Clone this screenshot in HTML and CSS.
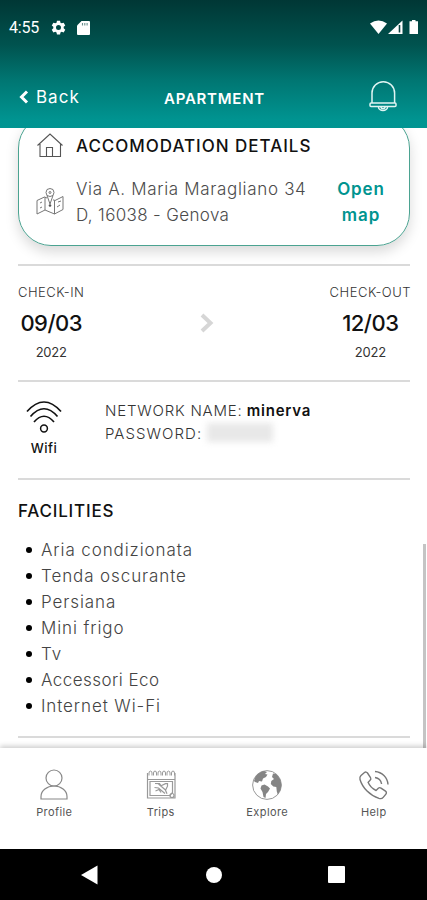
FILE: index.html
```html
<!DOCTYPE html>
<html lang="en">
<head>
<meta charset="utf-8">
<title>Apartment</title>
<link rel="stylesheet" href="styles.css">
</head>
<body>
<div class="app">
  <header class="header">
    <div class="status">
      <span class="clock">4:55</span>
      <svg class="gear" width="15" height="15" viewBox="0 0 24 24"><path fill="#fff" fill-rule="evenodd" d="M9.500 1h5l.6 3.200 2 1.100 3.100-1.100 2.600 4.400-2.500 2.200v2.400l2.500 2.200-2.600 4.400-3.100-1.100-2 1.100-.6 3.200h-5l-.6-3.200-2-1.100-3.100 1.100-2.600-4.400 2.500-2.200v-2.400L1.200 8.600l2.600-4.400 3.100 1.100 2-1.100zM12 8a4 4 0 1 0 0 8 4 4 0 0 0 0-8z"/></svg>
      <svg class="sd" width="13" height="14" viewBox="0 0 13 14"><path fill="#fff" d="M4.500 0H12a1 1 0 0 1 1 1v12a1 1 0 0 1-1 1H1a1 1 0 0 1-1-1V4.500z"/><path stroke="#68908e" stroke-width="1.100" d="M5.500 2v2.500M7.800 2v2.500M10.100 2v2.500"/></svg>
      <svg class="signals" width="50" height="15" viewBox="0 0 50 15"><path fill="#fff" d="M0 3.500Q8.500-2.500 17 3.500L8.500 14z"/><path fill="#fff" d="M32.500.5V14H18z"/><path stroke="#0a4340" stroke-width="1.600" d="M29.500 5v7.500"/><path fill="#fff" d="M42 0h3.500v1.300H48V14h-8.500V1.300H42z"/></svg>
    </div>
    <div class="titlebar">
      <div class="back"><svg width="10" height="14" viewBox="0 0 10 14"><path d="M8 1.500 2.500 7 8 12.500" fill="none" stroke="#fff" stroke-width="3"/></svg><span>Back</span></div>
      <h1>APARTMENT</h1>
      <svg class="bell" width="28" height="32" viewBox="0 0 28 32"><g fill="none" stroke="#dff5f3" stroke-width="1.500"><path d="M3 23V13a11.300 11.300 0 0 1 22.600 0v10"/><rect x="1" y="23" width="26" height="3.500" rx="1"/><path d="M9.500 27a4.500 3.500 0 0 0 9 0M12 27a2 1.600 0 0 0 4 0"/></g></svg>
    </div>
  </header>

  <main class="content">
    <section class="card">
      <div class="row heading">
        <svg width="28" height="28" viewBox="0 0 28 28"><g fill="none" stroke="#555" stroke-width="1.100"><path d="M1.500 13.500 14 2l12.500 11.500M4 12v12.500h20.500V12M10.500 24V15.500h6V24"/></g></svg>
        <h2>ACCOMODATION DETAILS</h2>
      </div>
      <div class="row address">
        <svg width="28" height="30" viewBox="0 0 28 30"><g fill="none" stroke="#777" stroke-width="1"><path d="M11 11 8.500 10 1 13.500V27l8-4 9.500 4 8.500-4.500V9.500l-8 4-2-.7M9 10v13M18.500 13.500V27"/><circle cx="14" cy="5.500" r="4"/><path d="m11 8.500 3 8.500 3-8.500M4 16l2-1M22 15l3-1M21 20l3-2M4 21l2-1"/><circle cx="14" cy="5.500" r="1"/></g><circle cx="14" cy="18.500" r="1.300" fill="#555"/></svg>
        <p><span class="addr1">Via A. Maria Maragliano 34</span><br><span class="addr2">D, 16038 - Genova</span></p>
        <div class="open">Open<br>map</div>
      </div>
    </section>

    <section class="dates">
      <div class="date in"><small>CHECK-IN</small><strong>09/03</strong><span>2022</span></div>
      <svg width="14" height="20" viewBox="0 0 14 20"><path d="m2 2 8.500 8L2 18" fill="none" stroke="#d6d6d6" stroke-width="4"/></svg>
      <div class="date out"><small>CHECK-OUT</small><strong>12/03</strong><span>2022</span></div>
    </section>

    <section class="wifi">
      <div class="wifi-icon">
        <svg width="36" height="34" viewBox="0 0 36 34"><g fill="none" stroke="#111" stroke-width="1.700"><path d="M1 11.500Q18-7.500 35 11.500M4.500 16.500Q18 1 31.500 16.500M8 22Q18 10.500 28 22"/><circle cx="18" cy="28.500" r="3.400" stroke-width="1.500"/></g></svg>
        <span>Wifi</span>
      </div>
      <div class="network">
        <div><span class="net">NETWORK NAME:</span> <b>minerva</b></div>
        <div class="password"><span class="pass">PASSWORD:</span><i></i></div>
      </div>
    </section>

    <section class="facilities">
      <h2>FACILITIES</h2>
      <ul>
        <li>Aria condizionata</li>
        <li>Tenda oscurante</li>
        <li>Persiana</li>
        <li>Mini frigo</li>
        <li>Tv</li>
        <li class="tight">Accessori Eco</li>
        <li>Internet Wi-Fi</li>
      </ul>
    </section>
    <div class="scrollbar"></div>
  </main>

  <nav class="tabs">
    <div class="tab"><svg width="32" height="32" viewBox="0 0 32 32"><g fill="none" stroke="#888" stroke-width="1.200"><circle cx="16" cy="9" r="8"/><path d="M3 30v-2.500C3 21.500 9 17 16 17s13 4.500 13 10.500V30z"/></g></svg><span>Profile</span></div>
    <div class="tab"><svg width="32" height="32" viewBox="0 0 32 32"><g fill="none" stroke="#999" stroke-width="1.200"><path d="M2.500 4v25H30V4M2.500 10.500H30M5 12.500v14h20l2.500-3V12.500z"/><path d="M4 6.500V4a1.400 1.800 0 0 1 3 0v2.500m1.500 0V4a1.400 1.800 0 0 1 3 0v2.500m1.500 0V4a1.400 1.800 0 0 1 3 0v2.500m1.500 0V4a1.400 1.800 0 0 1 3 0v2.500m1.500 0V4a1.400 1.800 0 0 1 3 0v2.500m1.500 0V4a1.400 1.800 0 0 1 3 0v2.500" stroke-width="1"/><path d="m10 14.500 4.500.2 1.500 2 4.500-2h2v2.500l-2 4 1.500 3.500M9.500 18.500l4 .5 6.500 5.500M13.500 15l7 6M10.500 22l3.500-1.500 2 3" stroke-width="1.200"/><circle cx="27" cy="26.500" r="2"/></g></svg><span>Trips</span></div>
    <div class="tab"><svg width="32" height="32" viewBox="0 0 32 32"><circle cx="16" cy="16" r="14.400" fill="#fff" stroke="#999"/><path fill="#858585" d="M3 12C4 6.500 8 3 13 2l3 1-2 2 2.500.5L15 8l-3 1.500-1 3-3-.5-1 2-3-1zM10.500 16.500l3-1 3.500 2 2 2-2 3.500-2 2-.5 4-2-1-1-5-2-3.500zM22 4.500l3 .5c3.500 3 5.500 7 5.300 12-.3 3-1.500 6-3.500 8.500l-1-3-.5-4.500-3-.5-2.500-2.500.5-3L23 10l-2-2z"/></svg><span>Explore</span></div>
    <div class="tab"><svg width="32" height="32" viewBox="0 0 32 32"><g fill="none" stroke="#777" stroke-width="1.400"><path d="M3 6.500 6.500 3.500c1-.8 2.300-.5 3 .5l3 4.500c.6 1 .4 2-.4 2.800l-2 2c1.400 3.500 4.400 6.500 8 8.200l2.200-2.200c.8-.8 1.800-.8 2.700-.2l4.500 3c1 .7 1.200 2 .4 3l-2.700 3.300c-1 1.200-2.800 1.400-4.200 1C12 26.500 4.500 19 2 10.500c-.4-1.400 0-3 1-4z"/><path d="M17 2.500C24 3 29.500 8.500 30 15.500M17 8.500c3.500.5 6 3 6.600 6.500"/></g></svg><span>Help</span></div>
  </nav>

  <footer class="system">
    <svg width="17" height="20" viewBox="0 0 17 20"><path fill="#fff" d="M0 10 16.500.5v19z"/></svg>
    <div class="home"></div>
    <div class="recent"></div>
  </footer>
</div>
</body>
</html>
```
FILE: styles.css
```css
* { box-sizing: border-box; margin: 0; padding: 0; }
body { background: #fff; font-family: Inter, "Open Sans", sans-serif; color: #111; }
svg { display: block; flex: none; }
.app { width: 427px; height: 900px; display: flex; flex-direction: column; overflow: hidden; white-space: nowrap; }

.header { height: 128px; flex: none; position: relative; z-index: 1; background: linear-gradient(#003735 0, #00534f 45px, #007672 80px, #009491 120px, #009592 128px); color: #fff; }
.status { height: 55px; padding: 0 7px 0 9px; display: flex; align-items: center; }
.clock { font: 400 16px Roboto, sans-serif; width: 42px; letter-spacing: -.2px; }
.sd { margin-left: 11px; }
.signals { margin-left: auto; }
.titlebar { height: 73px; padding: 0 30px 0 19px; display: grid; grid-template-columns: 1fr auto 1fr; align-items: center; }
.back { display: flex; align-items: center; gap: 7px; margin-top: 10px; font-size: 17px; letter-spacing: 1px; }
h1 { font-size: 15px; font-weight: 600; margin: 14px 0 0 13px; letter-spacing: .75px; }
.bell { justify-self: end; margin-top: 8px; }

.content { height: 620px; flex: none; position: relative; overflow: hidden; padding: 0 17px 0 18px; }
.card { height: 131px; margin-top: -13px; padding: 16px 15px 0 17px; border: 1px solid #4ba391; border-radius: 33px; box-shadow: 0 6px 13px rgba(0,0,0,.15); }
.row { display: flex; }
.heading { height: 28px; align-items: center; gap: 12px; }
h2 { font-size: 17px; font-weight: 500; letter-spacing: .8px; }
.heading h2 { letter-spacing: .98px; margin-top: -1px; }
.address { margin-top: 16px; gap: 12px; font-size: 17px; line-height: 26px; color: #4b4b4b; font-weight: 300; }
.address svg { margin-top: 11px; }
.addr1 { letter-spacing: .67px; }
.addr2 { letter-spacing: .35px; }
.open { margin-left: auto; width: 66px; text-align: center; font-weight: 600; letter-spacing: .9px; color: #009490; }

.dates { height: 116px; margin-top: 18px; border-top: 2px solid #dadada; display: flex; justify-content: space-between; align-items: flex-start; }
.date { display: flex; flex-direction: column; align-items: center; }
.date small { font-size: 13px; line-height: 20px; margin-top: 16px; color: #333; font-weight: 300; letter-spacing: .5px; }
.date strong { font-size: 22px; line-height: 30px; margin-top: 6px; font-weight: 500; letter-spacing: -.5px; }
.date span { font-size: 13px; line-height: 20px; margin-top: 4px; color: #333; letter-spacing: -.2px; }
.date.out { margin-right: -1px; }
.dates svg { margin: 47px 0 0; }

.wifi { height: 98px; border-top: 2px solid #dadada; display: flex; }
.wifi-icon { width: 52px; display: flex; flex-direction: column; align-items: center; padding-top: 18px; font-size: 13px; font-weight: 500; line-height: 20px; letter-spacing: .5px; }
.wifi-icon span { margin-top: 4px; }
.network { margin: 18px 0 0 35px; font-size: 15px; line-height: 22px; font-weight: 300; color: #333; }
.net { letter-spacing: .78px; }
.pass { letter-spacing: 1.05px; }
.network b { font-weight: 600; letter-spacing: .8px; color: #111; }
.password { display: flex; margin-top: 1px; }
.password i { width: 66px; height: 19px; background: #e8e8e8; filter: blur(3px); margin: 0 0 0 5px; }

.facilities { height: 260px; border-top: 2px solid #dadada; border-bottom: 2px solid #dadada; }
.facilities h2 { line-height: 24px; margin-top: 19px; }
ul { list-style: none; margin-top: 14px; }
li { display: flex; align-items: center; height: 26px; padding-left: 8px; font-size: 17px; font-weight: 300; letter-spacing: .9px; color: #444; }
li.tight { letter-spacing: .45px; }
li::before { content: ""; width: 6px; height: 6px; border-radius: 50%; background: #000; margin-right: 9px; }
.scrollbar { position: absolute; right: 1px; top: 416px; width: 3px; height: 204px; background: #c4c4c4; }

.tabs { height: 101px; flex: none; position: relative; z-index: 1; background: #fff; box-shadow: 0 -2px 5px rgba(0,0,0,.2); display: grid; grid-template-columns: repeat(4, 1fr); padding: 21px 0 0 1px; }
.tab { display: flex; flex-direction: column; align-items: center; font-size: 11px; line-height: 16px; color: #555; letter-spacing: .4px; }
.tab span { margin-top: 3px; }

.system { height: 51px; flex: none; background: #000; display: flex; justify-content: space-between; align-items: center; padding: 0 82px 0 81px; }
.home { width: 16px; height: 16px; border-radius: 50%; background: #fff; margin-left: 2px; }
.recent { width: 17px; height: 17px; border-radius: 1px; background: #fff; }
```
